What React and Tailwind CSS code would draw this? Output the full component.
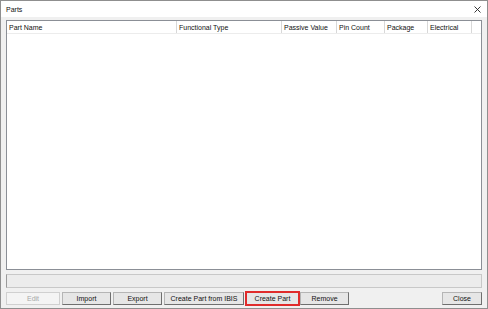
import React from 'react';

const columns = [
  { label: 'Part Name', w: 'w-[170px]' },
  { label: 'Functional Type', w: 'w-[105px]' },
  { label: 'Passive Value', w: 'w-[55px]' },
  { label: 'Pin Count', w: 'w-[48px]' },
  { label: 'Package', w: 'w-[43px]' },
  { label: 'Electrical', w: 'w-[44px]' },
];

const Btn = ({ children, w, disabled, highlight }) => (
  <div className={`${w} h-[13px] ${highlight ? 'outline-2 outline-[#e02b2b] -outline-offset-1' : ''}`}>
    <button
      className={`w-full h-full flex items-center justify-center border text-[7px] leading-none ${
        disabled
          ? 'bg-[#f4f4f4] border-[#d0d0d0] text-[#a8a8a8]'
          : 'bg-[#e6e6e6] border-[#b5b5b5] border-r-[#6f6f6f] border-b-[#6f6f6f] text-[#111]'
      }`}
    >
      {children}
    </button>
  </div>
);

export default function App() {
  return (
    <div
      className="w-[488px] h-[309px] border border-[#8f8f8f] bg-[#f0f0f0] flex flex-col text-[#111]"
      style={{ fontFamily: '"Liberation Sans", Arial, sans-serif' }}
    >
      {/* title bar */}
      <div className="h-[16px] bg-white flex items-center justify-between pl-[5px] pr-[6px]">
        <span className="text-[7px] leading-none">Parts</span>
        <svg width="7" height="7" viewBox="0 0 7 7" className="text-[#222]">
          <path d="M0.5 0.5 L6.5 6.5 M6.5 0.5 L0.5 6.5" stroke="currentColor" strokeWidth="0.9" />
        </svg>
      </div>

      <div className="flex-1 flex flex-col px-[5px] pt-[3px] pb-[3px]">
        {/* list view */}
        <div className="h-[250px] bg-white border border-[#8b8f96] flex flex-col">
          <div className="h-[13px] flex border-b border-[#ececec]">
            {columns.map((c) => (
              <div
                key={c.label}
                className={`${c.w} shrink-0 border-r border-[#d8d8d8] flex items-center pl-[2px] text-[7px] leading-none`}
              >
                {c.label}
              </div>
            ))}
            <div className="flex-1" />
          </div>
          <div className="flex-1" />
        </div>

        {/* status box */}
        <div className="mt-[4px] h-[14px] border border-[#c8c8c8] border-l-[#9a9a9a] bg-[#ececec]" />

        {/* buttons */}
        <div className="mt-[4px] flex items-center">
          <Btn w="w-[54px]" disabled>Edit</Btn>
          <div className="w-[2px]" />
          <Btn w="w-[49px]">Import</Btn>
          <div className="w-[2px]" />
          <Btn w="w-[49px]">Export</Btn>
          <div className="w-[2px]" />
          <Btn w="w-[80px]">Create Part from IBIS</Btn>
          <div className="w-[2px]" />
          <Btn w="w-[53px]" highlight>Create Part</Btn>
          <div className="w-[1px]" />
          <Btn w="w-[49px]">Remove</Btn>
          <div className="flex-1" />
          <Btn w="w-[40px]">Close</Btn>
        </div>
      </div>
    </div>
  );
}
